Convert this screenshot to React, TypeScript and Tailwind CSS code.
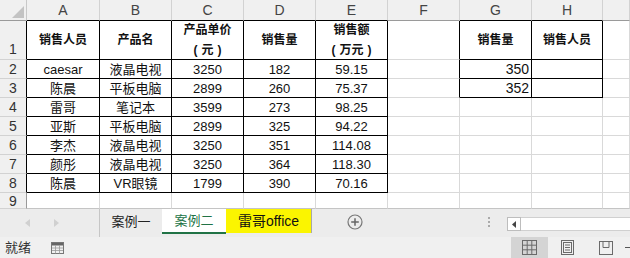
import React from 'react';

const font = { fontFamily: '"Liberation Sans", "Noto Sans CJK SC", sans-serif' };

const colLetters = ['A', 'B', 'C', 'D', 'E', 'F', 'G', 'H', ''];

const data: string[][] = [
  ['caesar', '液晶电视', '3250', '182', '59.15'],
  ['陈晨', '平板电脑', '2899', '260', '75.37'],
  ['雷哥', '笔记本', '3599', '273', '98.25'],
  ['亚斯', '平板电脑', '2899', '325', '94.22'],
  ['李杰', '液晶电视', '3250', '351', '114.08'],
  ['颜彤', '液晶电视', '3250', '364', '118.30'],
  ['陈晨', 'VR眼镜', '1799', '390', '70.16'],
];

const inTable = (r: number, c: number) => (r >= 1 && r <= 8 && c <= 4) || (r >= 1 && r <= 3 && (c === 6 || c === 7));

const rightBlack = (r: number, c: number) => inTable(r, c) || (r >= 1 && r <= 3 && c === 5);

function Paren({ text }: { text: string }) {
  return (
    <span className="flex gap-[4px]">
      <span>(</span>
      <span>{text}</span>
      <span>)</span>
    </span>
  );
}

function CellText({ r, c }: { r: number; c: number }) {
  if (r === 1) {
    const head: Record<number, React.ReactNode> = {
      0: '销售人员',
      1: '产品名',
      2: (
        <>
          <span>产品单价</span>
          <Paren text="元" />
        </>
      ),
      3: '销售量',
      4: (
        <>
          <span>销售额</span>
          <Paren text="万元" />
        </>
      ),
      6: '销售量',
      7: '销售人员',
    };
    if (!(c in head)) return null;
    return (
      <div className="flex h-full flex-col items-center justify-center text-[12px] font-bold leading-[20px] text-[#111]">
        {head[c]}
      </div>
    );
  }
  if (r >= 2 && r <= 8 && c <= 4) {
    return (
      <div className="flex h-full items-center justify-center text-[13px] leading-none text-[#111]">
        {data[r - 2][c]}
      </div>
    );
  }
  if (c === 6 && (r === 2 || r === 3)) {
    return (
      <div className="flex h-full items-end justify-end pr-[2px] text-[14px] leading-[18px] text-[#111]">
        {r === 2 ? '350' : '352'}
      </div>
    );
  }
  return null;
}

function Sheet() {
  const rows = [1, 2, 3, 4, 5, 6, 7, 8, 9];
  return (
    <div className="grid grid-cols-[27px_73px_72px_72px_72px_72px_72px_72px_71px_1fr] grid-rows-[21px_39px_19px_19px_19px_19px_19px_19px_19px_16px] bg-white">
      {/* corner */}
      <div className="relative border-r border-b border-r-[#c8c8c8] border-b-[#9a9a9a] bg-[#f0f0f0]">
        <svg className="absolute right-[2px] bottom-[2px]" width="12" height="12" viewBox="0 0 12 12">
          <polygon points="12,0 12,12 0,12" fill="#c3c3c3" />
        </svg>
      </div>
      {colLetters.map((l, c) => (
        <div
          key={'h' + c}
          className={`flex items-center justify-center border-r border-b border-r-[#d2d2d2] bg-[#f0f0f0] text-[14px] text-[#444] ${
            inTable(1, c) ? 'border-b-black' : 'border-b-[#9a9a9a]'
          }`}
        >
          {l}
        </div>
      ))}
      {rows.map((r) => (
        <React.Fragment key={r}>
          <div
            className={`flex justify-center border-r border-b border-b-[#d2d2d2] bg-[#f0f0f0] text-[14px] leading-[16px] text-[#333] ${
              r <= 8 ? 'border-r-black' : 'border-r-[#9a9a9a]'
            } ${r === 1 ? 'items-end pb-[2px]' : 'items-center'}`}
          >
            {r}
          </div>
          {colLetters.map((_, c) => (
            <div
              key={c}
              className={`overflow-hidden border-r border-b ${rightBlack(r, c) ? 'border-r-black' : 'border-r-[#d9d9d9]'} ${
                inTable(r, c) ? 'border-b-black' : r === 9 ? 'border-b-[#c4c4c4]' : 'border-b-[#d9d9d9]'
              }`}
            >
              <CellText r={r} c={c} />
            </div>
          ))}
        </React.Fragment>
      ))}
    </div>
  );
}

function TabBar() {
  return (
    <div className="flex h-[28px] bg-[#ececec] text-[13px]">
      <div className="flex w-[100px] items-center border-r border-r-[#c6c6c6] pl-[25px]">
        <svg width="6" height="8" viewBox="0 0 6 8">
          <polygon points="5,0 5,8 0,4" fill="#d0d0d0" />
        </svg>
        <svg className="ml-[23px]" width="6" height="8" viewBox="0 0 6 8">
          <polygon points="0,0 0,8 5,4" fill="#d0d0d0" />
        </svg>
      </div>
      <div className="flex w-[62px] items-center justify-center pb-[3px] text-[#222]">案例一</div>
      <div className="flex h-[25px] w-[64px] items-center justify-center border-b-2 border-b-[#217346] bg-white pt-[1px] text-[#217346]">
        案例二
      </div>
      <div className="flex h-[24px] w-[86px] items-center justify-center border-r border-r-[#a8a8a8] bg-[#fbf500] text-[14px] text-[#111]">
        雷哥office
      </div>
      <div className="flex w-[176px] items-center pl-[35px] pb-[3px]">
        <svg width="16" height="16" viewBox="0 0 16 16">
          <circle cx="8" cy="8" r="7" fill="none" stroke="#777" strokeWidth="1.2" />
          <path d="M8 4.2v7.6M4.2 8h7.6" stroke="#666" strokeWidth="1.5" />
        </svg>
      </div>
      <div className="flex w-[19px] flex-col items-start justify-center gap-[2px] pb-[3px]">
        <span className="h-[2px] w-[2px] bg-[#aaa]" />
        <span className="h-[2px] w-[2px] bg-[#aaa]" />
        <span className="h-[2px] w-[2px] bg-[#aaa]" />
      </div>
      <div className="flex flex-1 items-start pt-[8px]">
        <div className="flex h-[14px] w-[14px] items-center justify-center border border-[#bdbdbd] bg-white">
          <svg width="4" height="7" viewBox="0 0 4 7">
            <polygon points="4,0 4,7 0,3.5" fill="#444" />
          </svg>
        </div>
        <div className="h-[14px] flex-1 border-y border-y-[#d0d0d0] bg-white" />
      </div>
    </div>
  );
}

function StatusBar() {
  return (
    <div className="flex h-[21px] items-center bg-[#f0f0f0] text-[13px] text-[#333]">
      <span className="pl-[5px]">就绪</span>
      <svg className="ml-[20px]" width="13" height="12" viewBox="0 0 13 12">
        <rect x="0.5" y="0.5" width="12" height="11" fill="none" stroke="#777" />
        <rect x="1" y="1" width="11" height="2.5" fill="#666" />
        <path d="M1 6h11M1 8.5h11M4.5 3.5v8M8.5 3.5v8" stroke="#999" strokeWidth="0.8" />
      </svg>
      <div className="ml-auto flex h-full items-center">
        <div className="flex h-full w-[37px] items-center justify-center bg-[#d4d4d4]">
          <svg width="15" height="15" viewBox="0 0 15 15">
            <rect x="0.5" y="0.5" width="14" height="14" fill="none" stroke="#6a6a6a" />
            <path d="M5.2 0.5v14M9.8 0.5v14M0.5 5.2h14M0.5 9.8h14" stroke="#6a6a6a" />
          </svg>
        </div>
        <div className="flex h-full w-[39px] items-center justify-center">
          <svg width="13" height="15" viewBox="0 0 13 15">
            <rect x="0.5" y="0.5" width="12" height="14" fill="none" stroke="#6a6a6a" />
            <rect x="2.5" y="2.5" width="8" height="10" fill="none" stroke="#6a6a6a" />
            <path d="M4 5h5M4 7.5h5M4 10h5" stroke="#6a6a6a" />
          </svg>
        </div>
        <div className="flex h-full w-[38px] items-center justify-center">
          <svg width="14" height="14" viewBox="0 0 14 14">
            <rect x="0.5" y="0.5" width="13" height="13" fill="none" stroke="#6a6a6a" />
            <path d="M4 0.5v6h6v-6" fill="none" stroke="#6a6a6a" />
          </svg>
        </div>
        <div className="h-[1.5px] w-[5px] bg-[#555]" />
      </div>
    </div>
  );
}

export default function App() {
  return (
    <div className="h-[258px] w-[630px] overflow-hidden bg-white" style={font}>
      <Sheet />
      <TabBar />
      <StatusBar />
    </div>
  );
}
